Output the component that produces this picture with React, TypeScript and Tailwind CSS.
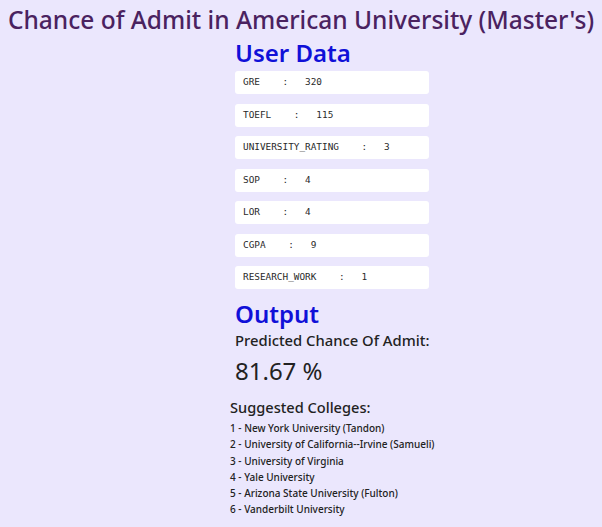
import React from "react";

const fields: [string, string][] = [
  ["GRE", "320"],
  ["TOEFL", "115"],
  ["UNIVERSITY_RATING", "3"],
  ["SOP", "4"],
  ["LOR", "4"],
  ["CGPA", "9"],
  ["RESEARCH_WORK", "1"],
];

const colleges = [
  "1 - New York University (Tandon)",
  "2 - University of California--Irvine (Samueli)",
  "3 - University of Virginia",
  "4 - Yale University",
  "5 - Arizona State University (Fulton)",
  "6 - Vanderbilt University",
];

export default function App() {
  return (
    <div
      className="w-[602px] h-[527px] overflow-hidden bg-[#ebe7fd]"
      style={{ fontFamily: '"Noto Sans", "Open Sans", sans-serif' }}
    >
      <h1 className="text-center whitespace-nowrap text-[24.5px] leading-[34px] pt-[3px] text-[#4a2260] font-medium">
        Chance of Admit in American University (Master's)
      </h1>
      <div className="pl-[235px]">
        <h2 className="text-[24px] leading-[32px] text-[#1010d8] font-semibold">User Data</h2>
        <div className="flex flex-col gap-[9.5px] mt-[2px] w-[194px]">
          {fields.map(([k, v]) => (
            <div
              key={k}
              className="h-[23px] bg-white rounded-[3px] flex items-center pl-[8px] text-[9.4px] text-[#2a2a2a] whitespace-pre"
              style={{ fontFamily: '"DejaVu Sans Mono", monospace' }}
            >
              {`${k}    :   ${v}`}
            </div>
          ))}
        </div>
        <h2 className="mt-[9px] text-[24px] leading-[32px] text-[#1010d8] font-semibold">Output</h2>
        <div className="text-[14.8px] leading-[22px] text-[#222] font-medium -mt-[1px]">
          Predicted Chance Of Admit:
        </div>
        <div className="text-[24px] leading-[34px] text-[#222] mt-[3px]">81.67 %</div>
      </div>
      <div className="pl-[230px] mt-[8px]">
        <div className="text-[14.6px] leading-[22px] text-[#222] font-medium">Suggested Colleges:</div>
        <ul className="mt-[2px]">
          {colleges.map((c) => (
            <li key={c} className="text-[10px] leading-[16.3px] text-[#222] font-medium">
              {c}
            </li>
          ))}
        </ul>
      </div>
    </div>
  );
}
